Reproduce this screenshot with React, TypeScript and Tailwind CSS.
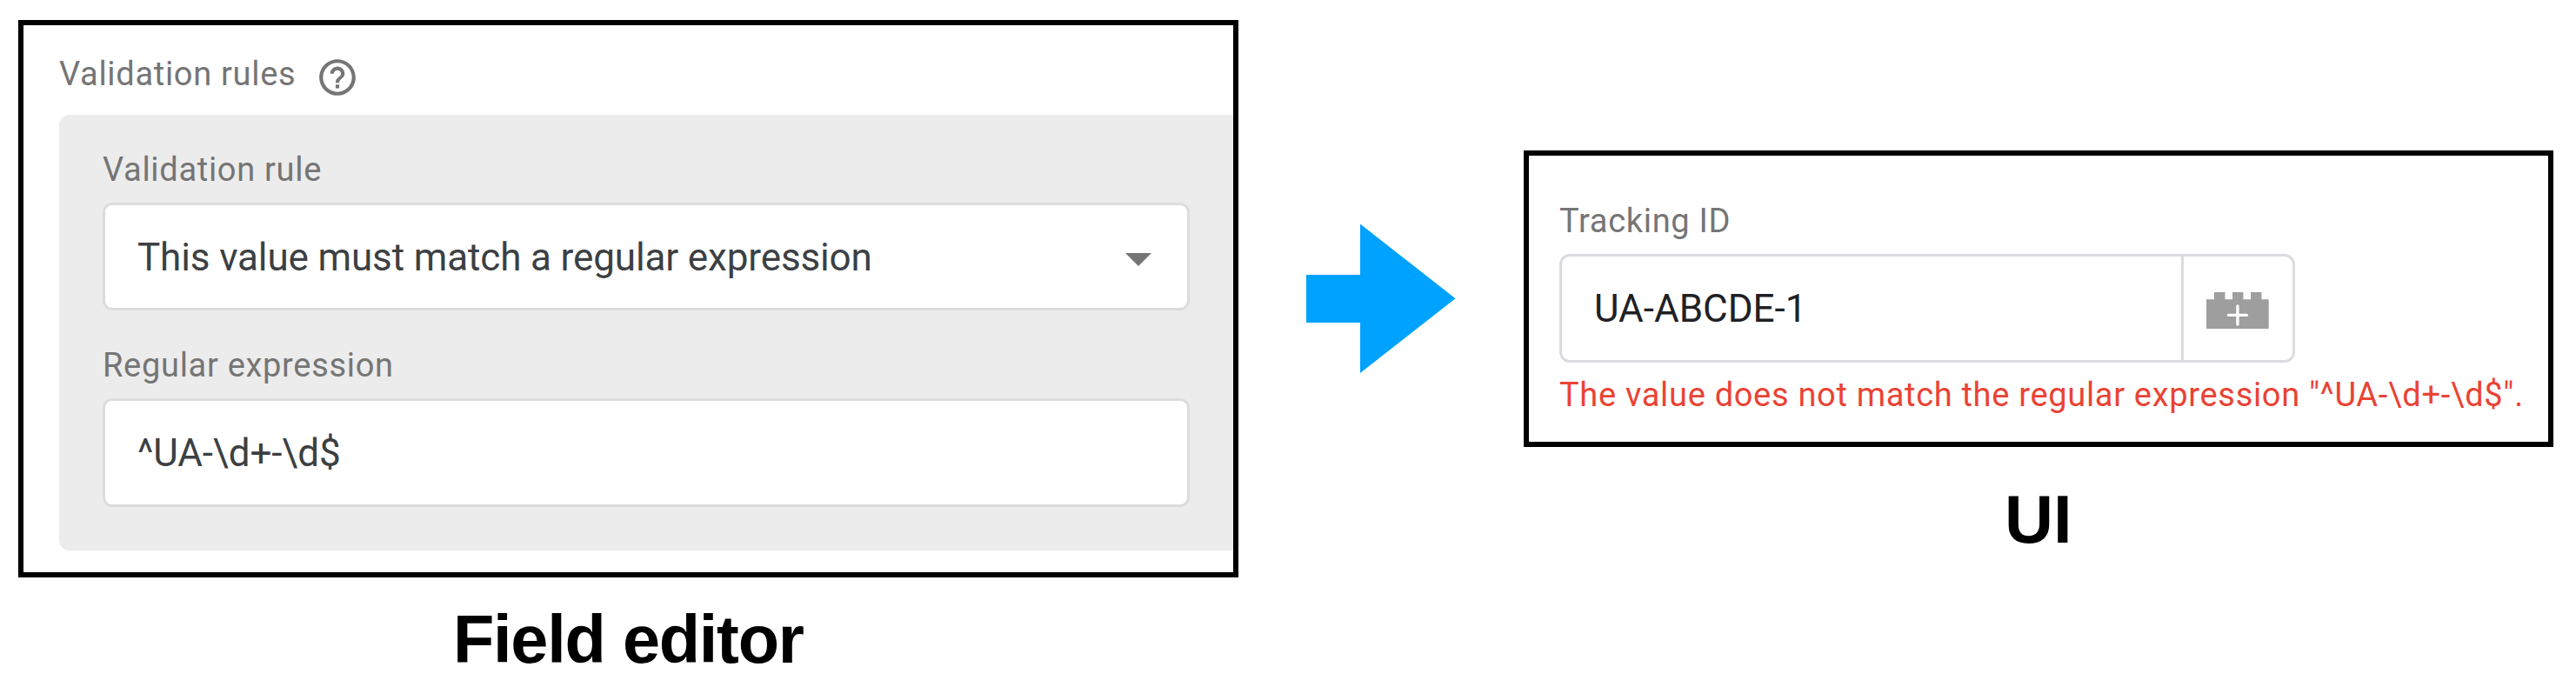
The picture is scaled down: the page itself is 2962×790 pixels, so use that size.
import type { ReactNode } from "react";

function HelpIcon() {
  return (
    <svg viewBox="0 0 24 24" className="mt-[0.5px] size-[50px] fill-[#757575]">
      <path d="M11 18h2v-2h-2v2zm1-16C6.48 2 2 6.48 2 12s4.48 10 10 10 10-4.48 10-10S17.52 2 12 2zm0 18c-4.41 0-8-3.59-8-8s3.59-8 8-8 8 3.59 8 8-3.59 8-8 8zm0-14c-2.21 0-4 1.79-4 4h2c0-1.1.9-2 2-2s2 .9 2 2c0 2-3 1.75-3 5h2c0-2.25 3-2.5 3-5 0-2.21-1.79-4-4-4z" />
    </svg>
  );
}

function BrickIcon() {
  return (
    <svg viewBox="0 0 72 42" className="h-[42px] w-[72px]">
      <path d="M0 8.3H9V0H21.4V8.3H30V0H42.4V8.3H51V0H63.4V8.3H71.7V42H0Z" fill="#9e9e9e" />
      <path d="M35.9 16V37M25.4 26.4H46.4" stroke="#fff" strokeWidth="3.4" strokeLinecap="round" />
    </svg>
  );
}

function Arrow() {
  return (
    <svg viewBox="0 0 172 172" className="ml-[78px] mt-[257px] size-[172px] shrink-0">
      <path d="M0 59H62V0.5L171.5 86.3L62 172V114H0Z" fill="#00a2ff" />
    </svg>
  );
}

function Label({ children }: { children: ReactNode }) {
  return (
    <div className="h-[44px] whitespace-nowrap text-[38px] leading-[44px] tracking-[0.7px] text-[#757575]">
      {children}
    </div>
  );
}

function Caption({ children }: { children: ReactNode }) {
  return (
    <h2 className="whitespace-nowrap font-['Liberation_Sans',Arial,sans-serif] text-[77.5px] font-bold leading-[80px] text-black">
      {children}
    </h2>
  );
}

export default function App() {
  return (
    <main className="flex h-[790px] w-[2962px] items-start overflow-hidden bg-white font-['Roboto',sans-serif]">
      <section className="ml-[21px] mt-[23px] w-[1403px] shrink-0">
        <div className="h-[641px] border-[6px] border-black pl-[41px] pt-[34px]">
          <div className="flex h-[50px] items-start">
            <div className="w-[295px]">
              <Label>Validation rules</Label>
            </div>
            <HelpIcon />
          </div>
          <div className="mt-[19px] h-[501px] rounded-l-xl bg-[#ececec] pl-[50px] pr-[50px] pt-[41px]">
            <Label>Validation rule</Label>
            <div className="mt-4 flex h-[124px] items-center justify-between rounded-[11px] border-[3px] border-[#dcdcdc] bg-white pl-[37px] pr-[41px] pt-0.5 text-[44px] leading-[52px] tracking-[-0.13px] text-[#3c4043]">
              <span>This value must match a regular expression</span>
              <svg viewBox="0 0 30 15" className="mt-1 h-[15px] w-[30px]">
                <path d="M0 0H30L15 15Z" fill="#757575" />
              </svg>
            </div>
            <div className="mt-[41px]">
              <Label>Regular expression</Label>
            </div>
            <div className="mt-4 flex h-[125px] items-center rounded-[11px] border-[3px] border-[#dcdcdc] bg-white pl-[37px] text-[44px] leading-[52px] tracking-[-0.13px] text-[#3c4043]">
              {"^UA-\\d+-\\d$"}
            </div>
          </div>
        </div>
        <div className="mt-[31px] pl-[500px] tracking-[-1.25px]">
          <Caption>Field editor</Caption>
        </div>
      </section>

      <Arrow />

      <section className="ml-[78px] mt-[173px] w-[1184px] shrink-0">
        <div className="h-[341px] border-[6px] border-black pl-[35px] pt-[53px]">
          <Label>Tracking ID</Label>
          <div className="mt-4 flex h-[125px] w-[846px] rounded-xl border-[3px] border-[#dadce0]">
            <div className="flex flex-1 items-center pl-[37px] text-[44px] leading-[52px] text-[#202124]">
              UA-ABCDE-1
            </div>
            <div className="flex w-[128px] items-center border-l-[3px] border-[#dadce0] pl-[26px] pt-[5px]">
              <BrickIcon />
            </div>
          </div>
          <div className="mt-[15px] whitespace-nowrap text-[38px] leading-[44px] tracking-[0.69px] text-[#ea4335]">
            {'The value does not match the regular expression "^UA-\\d+-\\d$".'}
          </div>
        </div>
        <div className="mt-[43px] pl-[553px]">
          <Caption>UI</Caption>
        </div>
      </section>
    </main>
  );
}
